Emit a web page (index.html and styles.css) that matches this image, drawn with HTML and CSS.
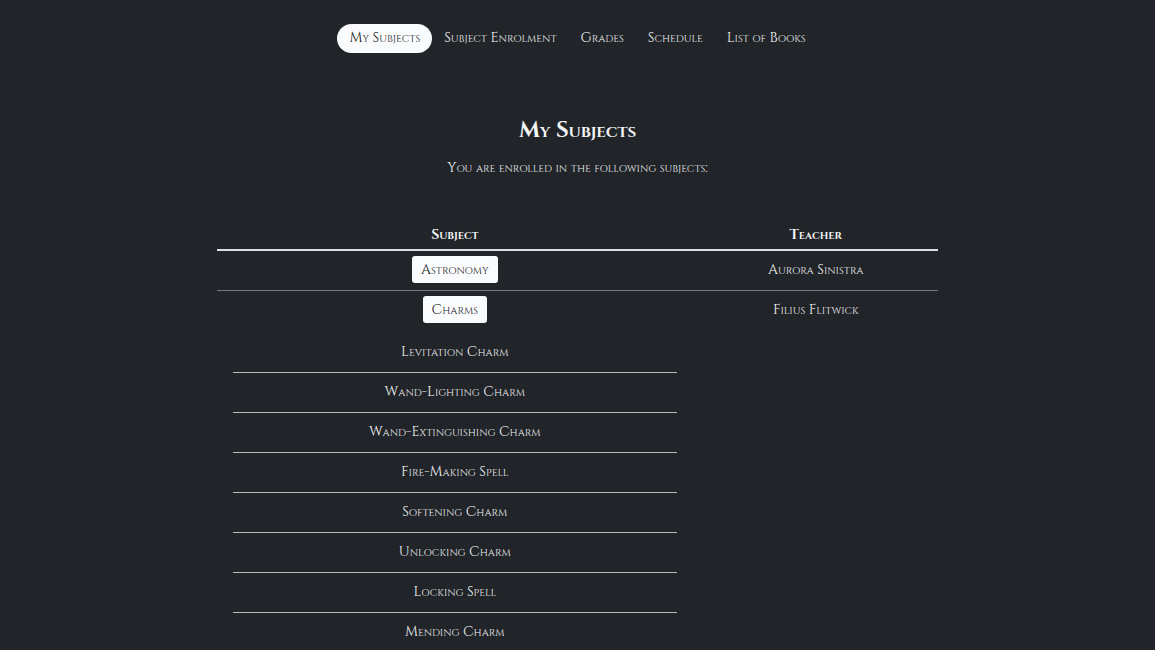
FILE: index.html
```html
<!DOCTYPE html>
<html lang="en">
<head>
<meta charset="utf-8">
<meta name="viewport" content="width=device-width, initial-scale=1">
<title>My Subjects</title>
<link rel="stylesheet" href="styles.css">
</head>
<body>
<nav class="nav">
  <a class="nav-link active" href="#" aria-current="page">My Subjects</a>
  <a class="nav-link" href="#">Subject Enrolment</a>
  <a class="nav-link" href="#">Grades</a>
  <a class="nav-link" href="#">Schedule</a>
  <a class="nav-link" href="#">List of Books</a>
</nav>
<main class="container">
  <h1 class="title">My Subjects</h1>
  <p class="intro">You are enrolled in the following subjects:</p>
  <table class="subjects">
    <thead>
      <tr><th class="col-subject" scope="col">Subject</th><th scope="col">Teacher</th></tr>
    </thead>
    <tbody>
      <tr>
        <td><button class="btn" type="button" aria-expanded="false">Astronomy</button></td>
        <td class="teacher">Aurora Sinistra</td>
      </tr>
      <tr>
        <td>
          <button class="btn" type="button" aria-expanded="true">Charms</button>
          <ul class="topics">
            <li>Levitation Charm</li>
            <li>Wand-Lighting Charm</li>
            <li>Wand-Extinguishing Charm</li>
            <li>Fire-Making Spell</li>
            <li>Softening Charm</li>
            <li>Unlocking Charm</li>
            <li>Locking Spell</li>
            <li>Mending Charm</li>
          </ul>
        </td>
        <td class="teacher">Filius Flitwick</td>
      </tr>
    </tbody>
  </table>
</main>
</body>
</html>
```

FILE: styles.css
```css
* {
  box-sizing: border-box;
}

body {
  margin: 0;
  background: #212429;
  color: #f3f4f5;
  font-family: Cinzel, "Liberation Serif", serif;
  font-size: 14px;
  line-height: 18px;
  font-variant-caps: small-caps;
  text-align: center;
}

.nav {
  display: flex;
  justify-content: center;
  padding-top: 24px;
}

.nav-link {
  padding: 5px 12px 6px;
  border-radius: 15px;
  color: inherit;
  text-decoration: none;
}

.nav-link.active {
  background: #fafbfc;
  color: #111317;
}

.container {
  width: 62.5%;
  margin: 65px auto 0;
}

.title {
  margin: 0 0 15px;
  font-size: 22px;
  line-height: 26px;
}

.intro {
  margin: 0;
}

.subjects {
  width: 100%;
  margin-top: 44px;
  border-collapse: separate;
  border-spacing: 0;
  table-layout: fixed;
}

.col-subject {
  width: 66%;
}

.subjects th {
  padding: 5px 6px;
  border-bottom: 2px solid #dcdde4;
}

.subjects td {
  padding: 5px 6px 7px;
  vertical-align: top;
}

.subjects tr:not(:last-child) td {
  border-bottom: 1px solid #777a7e;
}

.subjects .teacher {
  padding-top: 10px;
}

.btn {
  display: block;
  margin: 0 auto;
  padding: 4px 9px;
  border: 0;
  border-radius: 3px;
  background: #fafbfc;
  color: #111317;
  font: inherit;
  font-variant-caps: small-caps;
  line-height: 19px;
}

.topics {
  margin: 10px 10px 0;
  padding: 0;
  list-style: none;
}

.topics li {
  padding: 10px 0 11px;
  border-bottom: 1px solid #b5b7ba;
}
```
